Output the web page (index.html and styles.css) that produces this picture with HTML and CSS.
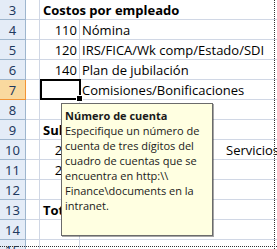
FILE: index.html
```html
<!DOCTYPE html>
<html>
<head>
<meta charset="utf-8">
<link rel="stylesheet" href="styles.css">
</head>
<body>
<div class="sheet">
  <div class="row"><div class="rh">3</div><div class="ca"></div><div class="cb bold ov">Costos por empleado</div><div class="cc"></div></div>
  <div class="row"><div class="rh">4</div><div class="ca"></div><div class="cb num">110</div><div class="cc">Nómina</div></div>
  <div class="row"><div class="rh">5</div><div class="ca"></div><div class="cb num">120</div><div class="cc">IRS/FICA/Wk comp/Estado/SDI</div></div>
  <div class="row"><div class="rh">6</div><div class="ca"></div><div class="cb num">140</div><div class="cc">Plan de jubilación</div></div>
  <div class="row"><div class="rh sel">7</div><div class="ca"></div><div class="cb num"></div><div class="cc">Comisiones/Bonificaciones</div></div>
  <div class="row"><div class="rh">8</div><div class="ca"></div><div class="cb"></div><div class="cc"></div></div>
  <div class="row"><div class="rh">9</div><div class="ca"></div><div class="cb bold ov">Subtotal</div><div class="cc"></div></div>
  <div class="row"><div class="rh">10</div><div class="ca"></div><div class="cb num">210</div><div class="cc"><span class="far">Servicios</span></div></div>
  <div class="row"><div class="rh">11</div><div class="ca"></div><div class="cb num">220</div><div class="cc"></div></div>
  <div class="row"><div class="rh">12</div><div class="ca"></div><div class="cb"></div><div class="cc"></div></div>
  <div class="row"><div class="rh">13</div><div class="ca"></div><div class="cb bold ov">Total</div><div class="cc"></div></div>
  <div class="row"><div class="rh">14</div><div class="ca"></div><div class="cb"></div><div class="cc"></div></div>
  <div class="row"><div class="rh">15</div><div class="ca"></div><div class="cb"></div><div class="cc"></div></div>

  <div class="active"><div class="handle"></div></div>
  <div class="vbreak"></div>
  <div class="hbreak"></div>

  <div class="tip">
    <div class="tip-title">Número de cuenta</div>
    <div class="tip-body">Especifique un número de<br>cuenta de tres dígitos del<br>cuadro de cuentas que se<br>encuentra en http:\\<br>Finance\documents en la<br>intranet.</div>
  </div>
</div>
</body>
</html>
```
FILE: styles.css
```css
html, body {
  margin: 0;
  padding: 0;
  background: #ffffff;
  overflow: hidden;
}
.sheet {
  position: relative;
  width: 277px;
  height: 249px;
  overflow: hidden;
  font-family: "Open Sans", "Noto Sans", sans-serif;
  font-size: 13px;
  color: #000;
}
.row {
  display: flex;
  height: 19px;
  border-bottom: 1px solid #d0d7e5;
}
.rh {
  width: 26px;
  flex: none;
  background: #e4ecf7;
  border-right: 1px solid #9eb6ce;
  border-bottom: 1px solid #9eb6ce;
  margin-bottom: -1px;
  color: #1f3a60;
  font-family: "Noto Sans", sans-serif;
  font-size: 13px;
  display: flex;
  align-items: center;
  justify-content: center;
  box-sizing: border-box;
  height: 20px;
}
.rh.sel {
  background: #f9d99f;
  border-right: 1px solid #f29436;
  border-bottom: 1px solid #f29436;
}
.ca {
  width: 13px;
  flex: none;
  border-right: 1px solid #d0d7e5;
}
.cb {
  width: 39px;
  flex: none;
  border-right: 1px solid #d0d7e5;
  display: flex;
  align-items: center;
  white-space: nowrap;
  padding: 0 2px;
  box-sizing: border-box;
  width: 40px;
}
.cb.num {
  justify-content: flex-end;
}
.cb.ov {
  overflow: visible;
  border-right-color: transparent;
  position: relative;
  z-index: 1;
}
.bold {
  font-weight: 700;
  padding-left: 3px;
}
.cc {
  flex: 1;
  display: flex;
  align-items: center;
  white-space: nowrap;
  padding-left: 2px;
}
.far {
  margin-left: 144px;
}
.active {
  position: absolute;
  left: 40px;
  top: 79px;
  width: 41px;
  height: 21px;
  border: 2px solid #000;
  box-sizing: border-box;
}
.handle {
  position: absolute;
  right: -4px;
  bottom: -4px;
  width: 5px;
  height: 5px;
  background: #000;
  border: 1px solid #fff;
}
.vbreak {
  position: absolute;
  left: 274px;
  top: 0;
  width: 0;
  height: 249px;
  border-left: 1px dotted #333;
}
.hbreak {
  position: absolute;
  left: 0;
  top: 246px;
  width: 277px;
  height: 0;
  border-top: 1px dotted #333;
}
.tip {
  position: absolute;
  left: 61px;
  top: 103px;
  width: 152px;
  height: 133px;
  box-sizing: border-box;
  background: #ffffe1;
  border: 1px solid #6b6b6b;
  box-shadow: 1px 1px 0 rgba(0,0,0,0.35);
  padding: 4px 0 0 3px;
  font-family: "Open Sans", "Noto Sans", sans-serif;
  font-size: 11px;
  line-height: 15px;
  color: #1a1a1a;
  z-index: 2;
}
.tip-title {
  font-weight: 700;
}
```
